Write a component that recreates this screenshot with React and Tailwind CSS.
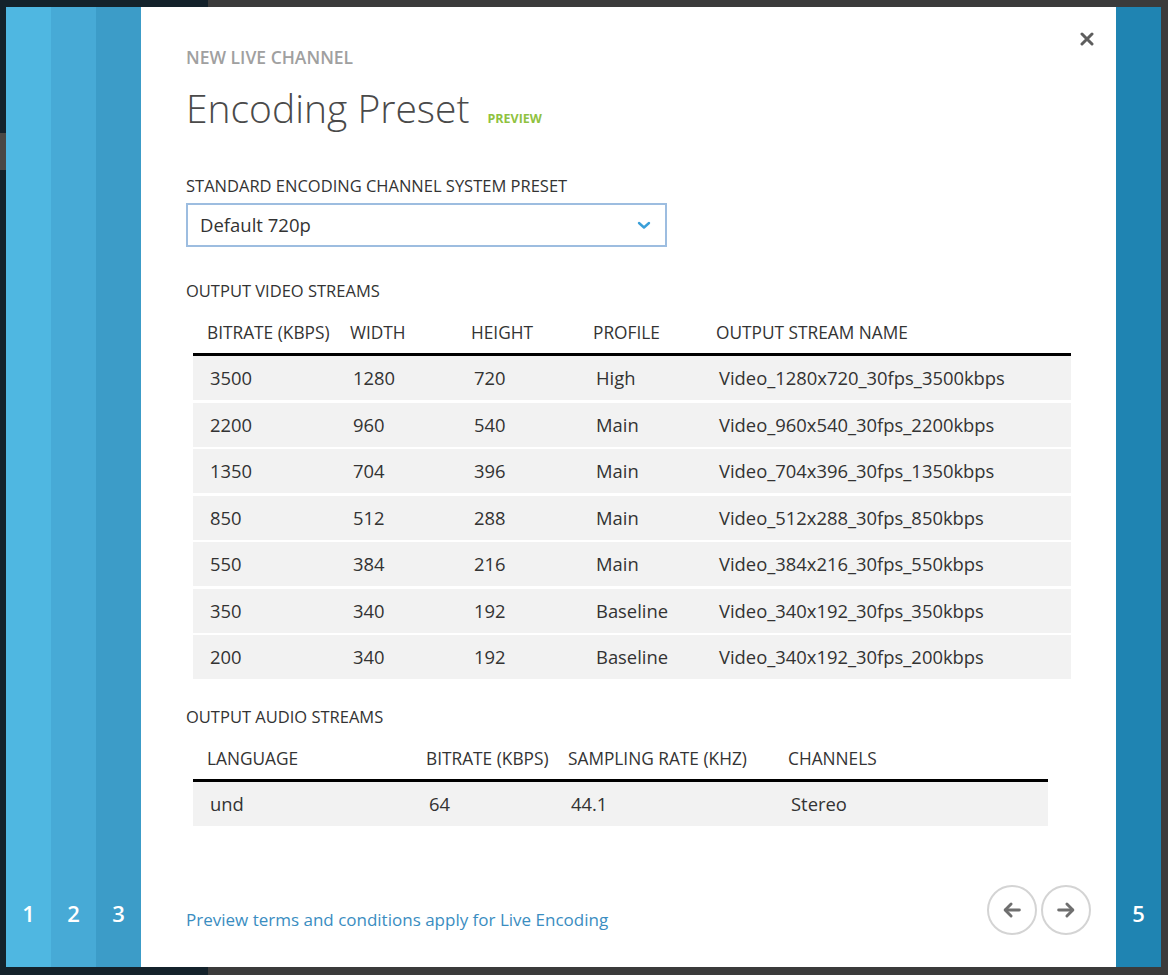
import React from 'react';

const videoStreams = [
  ['3500', '1280', '720', 'High', 'Video_1280x720_30fps_3500kbps'],
  ['2200', '960', '540', 'Main', 'Video_960x540_30fps_2200kbps'],
  ['1350', '704', '396', 'Main', 'Video_704x396_30fps_1350kbps'],
  ['850', '512', '288', 'Main', 'Video_512x288_30fps_850kbps'],
  ['550', '384', '216', 'Main', 'Video_384x216_30fps_550kbps'],
  ['350', '340', '192', 'Baseline', 'Video_340x192_30fps_350kbps'],
  ['200', '340', '192', 'Baseline', 'Video_340x192_30fps_200kbps'],
];

const videoCols = 'grid grid-cols-[143px_121px_122px_123px_1fr]';
const audioCols = 'grid grid-cols-[219px_142px_220px_1fr]';

function StepTab({ num, className }) {
  return (
    <div className={`w-[45px] flex flex-col justify-end items-center pb-[40px] ${className}`}>
      <span className="text-white text-[22px] leading-[28px] font-semibold">{num}</span>
    </div>
  );
}

function ArrowButton({ dir }) {
  return (
    <button className="w-[50px] h-[50px] rounded-full border-2 border-[#d4d4d4] flex items-center justify-center bg-white">
      <svg width="22" height="22" viewBox="0 0 24 24" fill="none" stroke="#6f6f6f" strokeWidth="3.2" strokeLinecap="round" strokeLinejoin="round">
        {dir === 'left' ? (
          <>
            <path d="M20 12H5" />
            <path d="M11 5.5 4.5 12l6.5 6.5" />
          </>
        ) : (
          <>
            <path d="M4 12h15" />
            <path d="M13 5.5l6.5 6.5-6.5 6.5" />
          </>
        )}
      </svg>
    </button>
  );
}

export default function App() {
  return (
    <div className="w-[1168px] h-[975px] flex flex-col bg-[linear-gradient(to_right,#14222b_208px,#3b3b3b_208px)] font-['Open_Sans',sans-serif] overflow-hidden">
      <div className="h-[7px]" />
      <div className="flex h-[960px]">
        {/* left gutter */}
        <div className="w-[6px] flex flex-col">
          <div className="h-[126px] bg-[#14222b]" />
          <div className="h-[37px] bg-[#4a4744]" />
          <div className="flex-1 bg-[#14222b]" />
        </div>

        <StepTab num="1" className="bg-[#4fb7e1]" />
        <StepTab num="2" className="bg-[#47aad6]" />
        <StepTab num="3" className="bg-[#3c9cc8]" />

        {/* wizard body */}
        <div className="relative w-[975px] bg-white flex flex-col pl-[45px] pt-[39px]">
          <button className="absolute top-[23px] right-[20px] p-[2px]">
            <svg width="14" height="14" viewBox="0 0 14 14" stroke="#5e5e5e" strokeWidth="3" strokeLinecap="round">
              <path d="M2 2l10 10M12 2 2 12" />
            </svg>
          </button>

          <div className="text-[17.5px] leading-[22px] font-semibold text-[#a0a0a0]">NEW LIVE CHANNEL</div>
          <div className="flex items-baseline mt-[16px]">
            <h1 className="text-[39px] leading-[48px] font-light text-[#4a4a4a]">Encoding Preset</h1>
            <span className="ml-[18px] text-[12.5px] font-bold text-[#8fc23f]">PREVIEW</span>
          </div>

          <div className="mt-[43px] text-[16.5px] leading-[22px] text-[#333]">STANDARD ENCODING CHANNEL SYSTEM PRESET</div>
          <div className="mt-[6px] w-[481px] h-[44px] border-2 border-[#9dbde0] flex items-center justify-between pl-[12px] pr-[14px]">
            <span className="text-[18.5px] text-[#333]">Default 720p</span>
            <svg width="14" height="10" viewBox="0 0 14 10" fill="none" stroke="#3a9fd8" strokeWidth="2.4" strokeLinecap="round" strokeLinejoin="round">
              <path d="M2 3l5 4.5L12 3" />
            </svg>
          </div>

          <div className="mt-[33px] text-[16.5px] leading-[22px] text-[#333]">OUTPUT VIDEO STREAMS</div>
          <div className="ml-[7px] w-[878px] mt-[10px]">
            <div className={`${videoCols} h-[44px] items-center border-b-[3px] border-black text-[17.3px] text-[#333]`}>
              <span className="pl-[14px]">BITRATE (KBPS)</span>
              <span className="pl-[14px]">WIDTH</span>
              <span className="pl-[14px]">HEIGHT</span>
              <span className="pl-[14px]">PROFILE</span>
              <span className="pl-[14px]">OUTPUT STREAM NAME</span>
            </div>
            <div className="flex flex-col gap-[2.5px]">
              {videoStreams.map((row, i) => (
                <div key={i} className={`${videoCols} h-[44px] items-center bg-[#f2f2f2] text-[18.4px] text-[#333]`}>
                  {row.map((cell, j) => (
                    <span key={j} className="pl-[17px]">{cell}</span>
                  ))}
                </div>
              ))}
            </div>
          </div>

          <div className="mt-[27px] text-[16.5px] leading-[22px] text-[#333]">OUTPUT AUDIO STREAMS</div>
          <div className="ml-[7px] w-[855px] mt-[10px]">
            <div className={`${audioCols} h-[44px] items-center border-b-[3px] border-black text-[17.3px] text-[#333]`}>
              <span className="pl-[14px]">LANGUAGE</span>
              <span className="pl-[14px]">BITRATE (KBPS)</span>
              <span className="pl-[14px]">SAMPLING RATE (KHZ)</span>
              <span className="pl-[14px]">CHANNELS</span>
            </div>
            <div className={`${audioCols} h-[44px] items-center bg-[#f2f2f2] text-[18.4px] text-[#333]`}>
              <span className="pl-[17px]">und</span>
              <span className="pl-[17px]">64</span>
              <span className="pl-[17px]">44.1</span>
              <span className="pl-[17px]">Stereo</span>
            </div>
          </div>

          <div className="mt-auto flex items-end justify-between pr-[25px] pb-[32px]">
            <a href="#" className="text-[17px] leading-[24px] text-[#3a8dc1] mb-[3px]">
              Preview terms and conditions apply for Live Encoding
            </a>
            <div className="flex gap-[4px]">
              <ArrowButton dir="left" />
              <ArrowButton dir="right" />
            </div>
          </div>
        </div>

        <StepTab num="5" className="bg-[#1f84b2]" />
        <div className="flex-1 bg-[#3b3b3b]" />
      </div>
      <div className="flex-1" />
    </div>
  );
}
